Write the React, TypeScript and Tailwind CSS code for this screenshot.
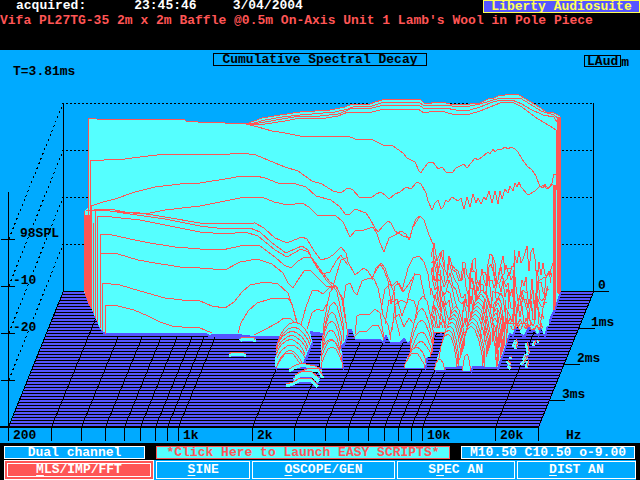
const FREQS = [300, 400, 500, 600, 700, 800, 900, 1000, 2000, 3000, 4000, 5000, 6000, 7000, 8000, 9000, 10000, 20000];
const FLOOR_ROWS = Array.from({ length: 45 }, (_, i) => i);
const WALL_LEVELS = [103, 150, 197, 244];

const FREQ_LABELS = [
  { x: 13, text: "200" },
  { x: 183, text: "1k" },
  { x: 257, text: "2k" },
  { x: 427, text: "10k" },
  { x: 500, text: "20k" },
  { x: 566, text: "Hz" },
];

const TIME_LABELS = [
  { x: 593, y: 291, textX: 598, text: "0" },
  { x: 579, y: 328, textX: 591, text: "1ms" },
  { x: 564, y: 364, textX: 577, text: "2ms" },
  { x: 549, y: 400, textX: 562, text: "3ms" },
];

const TOP_EDGE =
  "88,118 95,118 96,119 185,120 186,121 198,122 225,123 246,124 254,121 262,118 280,115 300,112 330,110 345,107 352,104 370,104 375,102 382,100 400,99 420,99 424,103 429,104 434,102 442,102 450,104 460,104 470,104 480,103 488,99 494,98 498,96 505,95 511,94 519,95 526,99 534,104 541,108 546,112 554,113 560,116";

const BOTTOM_EDGE =
  "560,292 556,304 552,313 548,322 544,336 541,326 538,335 534,329 528,327 524,335 521,334 517,322 513,334 509,333 504,350 500,360 497,368 496,366 472,366 471,371 469,366 463,366 445,366 445,370 442,366 438,366 434,370 437,359 443,341 446,331 443,325 440,332 436,326 434,333 431,348 427,355 425,368 423,366 404,366 407,358 413,351 419,345 420,334 415,344 412,337 408,343 404,337 400,342 390,342 386,334 383,341 380,339 355,339 352,329 348,329 345,341 341,345 343,368 341,366 321,366 320,368 321,344 323,333 310,331 312,342 305,358 302,366 276,366 275,368 276,346 284,336 254,336 238,334 212,334 210,335 206,333 106,333 101,330 96,319 90,305 84,292";

const SURFACE = `${TOP_EDGE} ${BOTTOM_EDGE} 84,211 88,208`;

// decay slices, earliest first
const SLICES = [
  TOP_EDGE,
  "246,124 254,123 265,120 282,117 300,115 335,112 348,109 355,106 372,106 384,102 408,102 420,103 424,106 435,105 446,105 458,107 470,106 480,104 490,101 500,98 512,98 520,98 530,104 541,111 554,115 558,118",
  "248,125 265,122 282,119 300,116 320,116 338,114 346,111 352,108 372,108 384,105 408,105 420,106 425,109 435,108 445,108 456,110 470,110 480,107 490,103 500,100 512,100 522,104 530,109 543,115 554,117 558,124",
  "248,125 265,124 285,121 300,118 320,119 338,116 348,112 372,112 384,109 408,109 418,109 424,113 435,111 445,112 455,115 470,114 480,111 490,107 500,103 512,102 522,107 535,117 543,122 550,126 556,130",
  "246,124 258,127 272,131 285,133 305,137 320,136 348,136 355,139 373,140 383,145 393,146 403,153 407,158 415,162 419,171 421,173 424,168 428,163 433,162 438,169 442,167 446,172 452,173 456,168 462,165 464,164 467,168 471,163 475,158 478,160 482,157 488,152 490,154 493,149 495,152 498,149 502,149 505,147 508,149 511,147 515,149 518,152 522,159 527,166 532,170 536,176 540,187 544,185 547,189 551,186 552,183 554,174 557,174",
  "90,161 104,160 125,159 140,157 157,155 172,154 200,154 230,154 241,153 256,155 275,163 285,167 298,171 305,176 312,181 322,184 333,191 341,193 346,189 349,188 353,190 359,197 371,198 376,194 381,192 385,195 389,199 395,194 400,192 406,187 411,189 417,182 421,184 426,193 428,201 432,210 435,203 438,200 441,209 443,207 446,200 448,202 452,197 458,201 461,198 463,206 464,209 467,197 470,207 473,194 476,203 478,198 481,204 484,197 486,200 489,191 492,203 495,191 498,204 500,191 502,199 505,189 508,193 510,186 513,191 515,183 517,187 519,182 521,187 528,195 535,191 540,186 543,188 545,184 548,189 551,184 555,186",
  "91,206 103,202 115,199 135,192 155,187 180,184 200,183 225,179 242,176 256,176 265,178 278,183 296,184 306,187 316,196 331,200 340,207 345,214 349,215 355,209 366,213 370,219 375,228 378,232 383,226 388,221 391,223 395,231 403,236 410,238 413,226 416,219 420,216 424,220 429,235 433,244",
  "86,210 100,210 120,212 145,214 165,210 200,206 225,201 245,197 262,197 274,202 288,205 302,203 309,207 318,216 335,215 343,222 350,237 355,231 364,230 373,227 377,234 380,243 384,252 389,238 395,235 401,231 406,234 409,240 413,227 420,216",
  "94,209 110,209 125,212 140,213 165,217 200,223 215,224 255,223 264,228 275,238 287,243 294,240 302,237 307,239 314,251 321,260 328,258 333,255 341,247 346,253 348,262 355,275 360,271 364,268 368,271 372,278 377,269 381,263 385,268 388,277 392,286 397,281 402,291 408,268 413,258 419,256 424,262 428,274 432,302",
  "94,210 110,211 130,214 165,219 200,226 225,229 250,228 260,232 272,243 286,253 297,248 302,246 308,250 313,261 318,269 322,274 330,272 336,261 341,255 344,260 348,265",
  "97,216 112,217 140,220 165,225 200,232 225,234 245,232 258,236 275,250 287,257 294,253 301,249 308,252 315,263 323,273 330,282 337,287 342,300 345,318 348,334",
  "100,234 112,235 135,240 150,243 175,247 200,249 222,250 245,245 260,246 275,257 284,265 291,268 298,261 305,257 312,258 318,266 326,280 333,287 336,276 341,260 346,258",
  "100,253 118,254 138,260 155,263 180,267 200,268 225,270 240,262 257,259 272,264 283,273 288,283 293,288 298,280 304,271 310,270 316,276 326,286 336,287 342,297 344,307 348,336",
  "102,283 120,285 140,291 165,298 182,300 200,301 212,306 225,308 234,302 242,292 250,285 265,282 278,284 288,293 293,308 298,325",
  "106,305 118,306 134,310 148,316 160,322 172,326 182,327 200,328 212,333",
  "238,333 241,323 248,311 257,303 270,299 282,298 288,298 292,304 296,320 299,328",
  "254,335 264,330 277,323 284,318 290,318 296,324 304,329 310,338",
  "301,325 306,307 312,291 317,290 323,294 329,288 334,287",
  "307,329 312,313 317,309 323,311 328,302 332,288",
  "343,304 346,285 350,283 354,292 357,295 362,281 369,278 374,279 378,288 381,303 383,315 388,325 391,340",
  "355,334 357,316 361,314 369,315 375,309 380,313 384,338",
  "353,338 360,331 367,331 373,325 378,325 381,331 384,340",
  "372,280 376,268 380,264 384,270 388,281 391,304 395,286 399,283 403,292 409,284 415,274 420,275 424,294 429,320",
  "385,324 389,300 393,302 397,299 402,316 408,299 414,301 420,320 424,337",
  "390,337 394,318 399,314 404,327 409,318 413,323 417,336",
  "381,310 385,289 390,284 394,292 396,320 400,336",
  "392,330 395,305 401,300 407,303 409,293 415,273",
];

// nested resonance humps: [left, right, foot y, peak y]
const HUMPS = [
  [278, 311, 342, 322],
  [277, 310, 345, 327],
  [276, 308, 348, 331],
  [276, 307, 351, 335],
  [276, 305, 355, 339],
  [277, 305, 358, 345],
  [277, 303, 366, 350],
  [276, 301, 368, 353],
  [323, 344, 337, 287],
  [323, 344, 341, 302],
  [322, 342, 344, 312],
  [322, 341, 349, 321],
  [322, 340, 352, 330],
  [321, 340, 355, 339],
  [321, 342, 361, 340],
  [321, 343, 368, 347],
];

// the same hump repeated up the time axis, furthest first
function stack(left: number, right: number, foot: number, peak: number, count: number, step: number) {
  return Array.from({ length: count }, (_, i) => {
    const j = count - 1 - i;
    return [Math.round(left + j * 1.2), Math.round(right + j * 1.2), foot - j * 3, peak - j * step];
  });
}

const FRONT_HUMPS = [
  [412, 434, 344, 296],
  [410, 433, 348, 308],
  [410, 433, 352, 320],
  [411, 432, 354, 332],
  [411, 431, 357, 341],
  [407, 426, 363, 347],
  [404, 425, 368, 353],
  ...stack(484, 497, 367, 333, 9, 5),
  ...stack(458, 483, 366, 326, 10, 4),
  ...stack(438, 457, 367, 334, 8, 4),
  [434, 445, 370, 359],
  [462, 471, 371, 354],
];

const ISLETS = [
  "240,340 242,338 254,338 255,341",
  "229,355 232,353 242,353 246,355",
  "289,370 294,367 301,364 315,367 322,371",
  "298,374 309,369 319,370 323,377",
  "294,379 301,374 312,374 319,381",
  "286,385 293,383 300,379 312,380 318,386",
  "295,376 303,372 311,372 319,379",
];

const DROPLETS = [
  "508,366 511,369", "507,361 510,365", "510,357 511,359", "521,365 523,362",
  "523,360 526,354", "526,368 528,361", "527,355 529,351", "526,348 527,343",
  "523,363 527,357", "513,347 516,340", "515,349 517,342", "533,346 535,341",
  "537,341 539,341", "527,352 528,346",
];

function freqX(freq: number) {
  return Math.round(8 + 243.5 * Math.log10(freq / 200));
}

function noise(n: number) {
  const v = Math.sin(n * 127.1 + 11.7) * 43758.5453;
  return v - Math.floor(v);
}

function humpPath([left, right, foot, peak]: number[]) {
  const w = right - left;
  const h = foot - peak;
  const points = [0, 0.06, 0.18, 0.34, 0.5, 0.66, 0.82, 0.94, 1].map((t) => {
    const rise = Math.pow(Math.sin(Math.PI * t), 0.75);
    return `${Math.round(left + w * t)},${Math.round(foot - h * rise)}`;
  });
  return points.join(" ");
}

// highest point that the treble hash reaches at each x
const HASH_TOP = [
  [431, 238], [436, 242], [439, 252], [442, 240], [446, 258], [449, 244], [454, 262], [458, 264], [461, 276],
  [464, 250], [468, 270], [471, 243], [477, 262], [484, 258], [490, 243], [496, 246], [502, 250], [508, 252],
  [514, 256], [518, 240], [525, 238], [531, 244], [537, 250], [541, 264], [546, 246], [552, 252],
];

function hashTop(x: number) {
  for (let i = 1; i < HASH_TOP.length; i++) {
    const [x0, y0] = HASH_TOP[i - 1];
    const [x1, y1] = HASH_TOP[i];
    if (x <= x1) return y0 + ((y1 - y0) * (x - x0)) / (x1 - x0);
  }
  return 252;
}

function hashSlice(k: number) {
  const end = 555 - k * 1.3;
  const points: string[] = [];
  for (let x = 431 + (k % 2); x < end; x += x < 460 ? 3 : 2) {
    const limit = x > 503 ? 330 - Math.abs(noise(x) * 8) : 332;
    const arch = Math.abs(Math.sin(x * 0.25 + Math.sin(x * 0.13) * 1.4 + k * 0.33));
    const rough = x < 460 ? 8 : 18;
    const dip = 30 * (1 - Math.sqrt(arch)) + noise(x + k * 71) * rough;
    const y = hashTop(x) + k * 7 + dip + (x > 514 && x < 537 && k > 0 ? 26 : 0);
    points.push(`${x},${Math.round(Math.min(limit, y))}`);
  }
  return { line: points.join(" "), area: `${points.join(" ")} ${Math.round(end) - 6},326 431,328` };
}

const HASH = Array.from({ length: 13 }, (_, k) => hashSlice(k));

function DecayPlot() {
  return (
    <svg
      className="block w-full h-auto font-bold"
      viewBox="0 83 640 360"
      role="img"
      aria-label="Cumulative Spectral Decay"
      shapeRendering="crispEdges"
      fill="none"
    >
      <polygon points="64,291 594,291 539,428 9,428" fill="#5555ff" />
      <g stroke="#000">
        {FLOOR_ROWS.map((i) => (
          <line key={i} x1={63.5 - i * 1.22} x2={594 - i * 1.22} y1={291.5 + i * 3} y2={291.5 + i * 3} />
        ))}
        {FREQS.map((f) => (
          <path key={f} d={`M${freqX(f)}.5 441V427l55-135`} />
        ))}
        <path d="M538.5 441V427l55-135V103M8.5 192V441L8.5 427l55-136V103" />
        <path d="M0 427H539" strokeWidth="2" />
        {WALL_LEVELS.map((y) => (
          <g key={y}>
            <path d={`M66 ${y}.5H593`} strokeDasharray="2 2" />
            <path d={`M9 ${y + 135}.5L63 ${y}.5`} strokeDasharray="2 3" />
            <path d={`M1 ${y + 136}.5H15`} />
          </g>
        ))}
        {TIME_LABELS.map((t) => (
          <path key={t.text} d={`M${t.x} ${t.y}.5h16`} />
        ))}
      </g>

      <clipPath id="floor">
        <polygon points="64,286 592,286 539,424 9,424" />
      </clipPath>
      <g clipPath="url(#floor)">
        <polygon points={SURFACE} fill="#5555ff" transform="translate(1 3)" />
      </g>
      <polygon points={SURFACE} fill="#55ffff" />

      <g stroke="#ff5555">
        <path d="M88.5 118V303M84.5 211V292M90.5 161V307M91.5 206V309M93.5 223V313M95.5 210V318M97.5 216V322M100.5 234V328M102.5 283V331M105.5 305V334" />
        <path d="M85 215H90V306L85 293Z" fill="#ff5555" />
        <path d="M558 117V293M560 117V292M559 117V294M555 185V306M554 185V310M557 174V190" strokeWidth="2" />
        <path d="M556.5 130V175" />
        {SLICES.map((points) => (
          <polyline key={points} points={points} />
        ))}
        {HUMPS.map((h) => (
          <polyline key={h.join()} points={humpPath(h)} fill="#55ffff" />
        ))}
        {HASH.map((slice) => (
          <g key={slice.line}>
            <polygon points={slice.area} fill="#55ffff" stroke="none" />
            <polyline points={slice.line} />
          </g>
        ))}
        {FRONT_HUMPS.map((h) => (
          <polyline key={h.join()} points={humpPath(h)} fill="#55ffff" />
        ))}
        <path d="M433.5 246V280M437.5 262V300M440.5 270V312M485 298L480 338M487 306L484 342M498 308L495 360M499 330L497 366M503 310L501 352M506 300L504 344M509 286L507 334M513 270V318M514 250V312M555 250V306" />
      </g>

      {ISLETS.map((points) => (
        <g key={points}>
          <polyline points={points} stroke="#55ffff" strokeWidth="3" transform="translate(0 1)" />
          <polyline points={points} stroke="#ff5555" transform="translate(0 -1)" />
        </g>
      ))}
      {DROPLETS.map((points) => (
        <g key={points}>
          <polyline points={points} stroke="#55ffff" strokeWidth="3" />
          <polyline points={points} stroke="#ff5555" transform="translate(1 -1)" />
        </g>
      ))}

      <g fill="#000">
        <text x="20" y="237">98SPL</text>
        <text x="13" y="284">-10</text>
        <text x="13" y="331">-20</text>
        {FREQ_LABELS.map((l) => (
          <text key={l.text} x={l.x} y="439">{l.text}</text>
        ))}
        {TIME_LABELS.map((l) => (
          <text key={l.text} x={l.textX} y={l.y - 2}>{l.text}</text>
        ))}
      </g>
    </svg>
  );
}

function MenuButton({ before = "", hot, after }: { before?: string; hot: string; after: string }) {
  return (
    <button type="button" className="h-[18px] min-w-0 border border-white leading-4 whitespace-nowrap">
      {before}
      <span className="underline underline-offset-2">{hot}</span>
      {after}
    </button>
  );
}

export default function App() {
  return (
    <div className="min-h-screen bg-black text-white font-bold text-[13px] leading-3 font-['Liberation_Mono',monospace]">
      <header className="h-[50px] whitespace-nowrap">
        <div className="flex h-[13px] pl-4">
          <span>acquired:</span>
          <time className="ml-12">23:45:46</time>
          <span className="ml-9">3/04/2004</span>
          <span className="ml-auto w-[157px] border border-[#ffff55] bg-[#5555ff] text-center text-[#ffff55]">
            Liberty Audiosuite
          </span>
        </div>
        <p className="pt-[2px] text-[#ff5555]">
          Vifa PL27TG-35 2m x 2m Baffle @0.5m On-Axis Unit 1 Lamb's Wool in Pole Piece
        </p>
      </header>

      <main className="bg-[#00aaff] text-black">
        <div className="grid grid-cols-3 h-[33px] pt-[3px]">
          <span className="pl-[13px] pt-[13px]">T=3.81ms</span>
          <h1 className="h-[13px] w-[214px] justify-self-center border border-black text-center whitespace-nowrap">
            Cumulative Spectral Decay
          </h1>
          <div className="flex justify-end pt-[2px] pr-[11px]">
            <span className="h-[12px] w-[37px] border border-black text-center leading-[11px]">LAud</span>
            <span className="pt-[2px]">m</span>
          </div>
        </div>
        <DecayPlot />
      </main>

      <footer>
        <div className="flex h-[17px] justify-between pt-[3px] pr-[5px] pl-1 whitespace-nowrap">
          <div className="h-[13px] w-[141px] border border-white bg-[#00aaff] text-center">Dual channel</div>
          <button type="button" className="h-[13px] w-[294px] border border-[#ff5555] bg-[#55ffff] text-[#ff5555]">
            *Click Here to Launch EASY SCRIPTS*
          </button>
          <div className="h-[13px] w-[174px] border border-white bg-[#00aaff] text-center">M10.50 C10.50 o-9.00</div>
        </div>
        <nav className="mr-1 ml-1 grid grid-cols-[151fr_95fr_143fr_119fr_120fr] items-center gap-x-[2px] bg-[#00aaff] h-5">
          <button type="button" className="h-5 border border-white bg-[#ff5555] p-[2px] whitespace-nowrap">
            <span className="block h-[14px] border border-white leading-3">
              <span className="underline underline-offset-2">M</span>LS/IMP/FFT
            </span>
          </button>
          <MenuButton hot="S" after="INE" />
          <MenuButton hot="O" after="SCOPE/GEN" />
          <MenuButton before="S" hot="P" after="EC AN" />
          <MenuButton hot="D" after="IST AN" />
        </nav>
      </footer>
    </div>
  );
}
